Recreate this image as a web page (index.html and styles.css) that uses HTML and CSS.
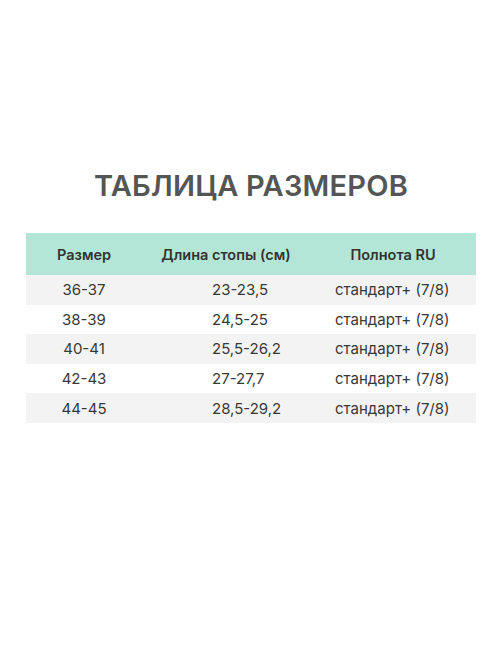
FILE: index.html
```html
<!DOCTYPE html>
<html lang="ru">
<head>
<meta charset="utf-8">
<link rel="stylesheet" href="styles.css">
</head>
<body>
<main class="page">
  <h1 class="title">ТАБЛИЦА РАЗМЕРОВ</h1>
  <div class="table">
    <div class="row head">
      <div class="c1">Размер</div>
      <div class="c2">Длина стопы (см)</div>
      <div class="c3">Полнота RU</div>
    </div>
    <div class="row alt">
      <div class="c1">36-37</div>
      <div class="c2">23-23,5</div>
      <div class="c3">стандарт+ (7/8)</div>
    </div>
    <div class="row">
      <div class="c1">38-39</div>
      <div class="c2">24,5-25</div>
      <div class="c3">стандарт+ (7/8)</div>
    </div>
    <div class="row alt">
      <div class="c1">40-41</div>
      <div class="c2">25,5-26,2</div>
      <div class="c3">стандарт+ (7/8)</div>
    </div>
    <div class="row">
      <div class="c1">42-43</div>
      <div class="c2">27-27,7</div>
      <div class="c3">стандарт+ (7/8)</div>
    </div>
    <div class="row alt">
      <div class="c1">44-45</div>
      <div class="c2">28,5-29,2</div>
      <div class="c3">стандарт+ (7/8)</div>
    </div>
  </div>
</main>
</body>
</html>
```

FILE: styles.css
```css
html, body {
  margin: 0;
  padding: 0;
  background: #ffffff;
}
body {
  font-family: Inter, "Noto Sans", sans-serif;
  color: #333333;
}
.page {
  width: 502px;
  height: 669px;
  padding-top: 166px;
  box-sizing: border-box;
}
.title {
  margin: 0;
  text-align: center;
  font-size: 29px;
  font-weight: 600;
  color: #555555;
  line-height: 40px;
  letter-spacing: 0.2px;
}
.table {
  margin: 27px 26px 0 26px;
  width: 450px;
}
.row {
  display: grid;
  grid-template-columns: 116px 168px 166px;
  height: 29.6px;
  align-items: center;
  font-size: 15px;
  color: #383838;
}
.row.alt {
  background: #f3f3f3;
}
.row.head {
  height: 42px;
  background: #b3e6d6;
  font-size: 14.5px;
  font-weight: 600;
  color: #333333;
}
.c1 { text-align: center; }
.row .c2 { padding-left: 70px; }
.row .c3 { padding-left: 25px; }
.row.head .c2, .row.head .c3 { padding-left: 0; text-align: center; }
```
